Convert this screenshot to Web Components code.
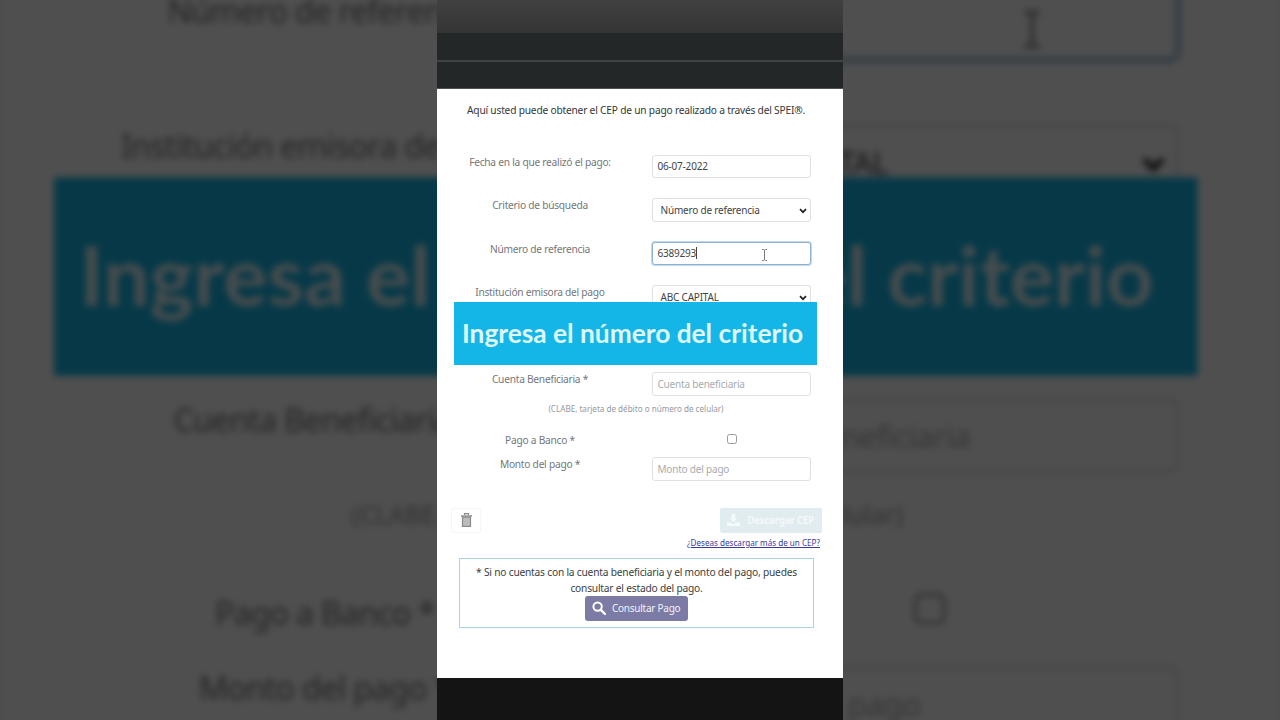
<!DOCTYPE html>
<html lang="es">
<head>
<meta charset="utf-8">
<title>CEP</title>
<style>
  html, body { margin: 0; height: 100%; background: #4f4f4f; overflow: hidden; }
</style>
</head>
<body>
<short-player></short-player>

<script>
const FONT = '"Noto Sans", "Open Sans", "DejaVu Sans", sans-serif';

class CepField extends HTMLElement {
    constructor() {
        super();
        this.shadowDOM = this.attachShadow({ mode: "open" });
    }

    connectedCallback() {
        const chevron = this.hasAttribute("select")
            ? `<svg class="chevron" width="8" height="6" viewBox="0 0 8 6"><path d="M1 1.2 L4 4.2 L7 1.2" fill="none" stroke="#222" stroke-width="1.7"/></svg>`
            : "";
        const cursor = this.hasAttribute("focused")
            ? `<i class="caret"></i><svg class="ibeam" width="7" height="12" viewBox="0 0 7 12"><path d="M1 .5h1.6l.9.8.9-.8H6M3.5 1.3v9.4M1 11.5h1.6l.9-.8.9.8H6" fill="none" stroke="#555" stroke-width=".8"/></svg>`
            : "";
        this.shadowDOM.innerHTML = `
        <style>
            :host {
                display: flex;
                align-items: center;
                position: relative;
                box-sizing: border-box;
                width: 159px;
                height: 23.6px;
                padding: 0 4.5px;
                background: #fff;
                border: 1px solid #e0e0e0;
                border-radius: 3px;
                font-size: 10px;
                letter-spacing: -.2px;
                color: #3f4448;
            }
            :host([select]) { padding-left: 7.5px; }
            :host([placeholder]) { color: #a9abad; }
            :host([focused]) {
                border-color: #8fb2cf;
                box-shadow: 0 0 0 1px #c3d9ea;
            }
            .caret { width: 1px; height: 12px; background: #444; }
            .chevron { position: absolute; right: 3px; top: 8.5px; }
            .ibeam { position: absolute; left: 108px; top: 6px; }
        </style>
        <slot></slot>${chevron}${cursor}`;
    }
}

class CepRow extends HTMLElement {
    constructor() {
        super();
        this.shadowDOM = this.attachShadow({ mode: "open" });
    }

    connectedCallback() {
        this.shadowDOM.innerHTML = `
        <style>
            :host {
                display: grid;
                grid-template-columns: 172px 159px;
                column-gap: 26px;
                height: 23.6px;
            }
            .label {
                text-align: center;
                font-size: 10.2px;
                letter-spacing: -.25px;
                line-height: 14px;
                color: #75777a;
            }
            .control { display: flex; justify-content: center; }
        </style>
        <div class="label">${this.getAttribute("label") || ""}</div>
        <div class="control"><slot></slot></div>`;
    }
}

class CepCheck extends HTMLElement {
    constructor() {
        super();
        this.attachShadow({ mode: "open" }).innerHTML = `
        <style>
            :host {
                display: block;
                box-sizing: border-box;
                width: 10px;
                height: 10px;
                margin-top: 1px;
                border: 1px solid #9a9a9a;
                border-radius: 2.5px;
                background: #fff;
            }
        </style>`;
    }
}

class CepButton extends HTMLElement {
    constructor() {
        super();
        this.attachShadow({ mode: "open" }).innerHTML = `
        <style>
            :host {
                display: inline-flex;
                align-items: center;
                box-sizing: border-box;
                height: 25px;
                flex: none;
                border-radius: 2px;
                font-size: 10px;
                letter-spacing: -.25px;
                white-space: nowrap;
            }
            :host([kind="trash"]) {
                width: 30px;
                justify-content: center;
                background: #fff;
                border: 1px solid #f5f5f5;
            }
            :host([kind="download"]) {
                width: 102px;
                padding-left: 7px;
                gap: 7px;
                background: #e0ecf0;
                color: #f4f8fa;
                font-weight: 700;
                letter-spacing: -.35px;
            }
            :host([kind="query"]) {
                width: 103px;
                padding-left: 7px;
                gap: 6px;
                background: #7b7ba6;
                color: #f2f2f7;
                border-radius: 3px;
            }
            svg { display: block; flex: none; }
        </style>
        <slot name="icon"></slot><slot></slot>`;
    }
}

class CepForm extends HTMLElement {
    constructor() {
        super();
        this.attachShadow({ mode: "open" }).innerHTML = `
        <style>
            :host {
                display: block;
                box-sizing: border-box;
                height: 100%;
                background: #fff;
                font-family: ${FONT};
                padding-top: 13.5px;
            }
            .intro {
                width: 400px;
                margin-left: -1px;
                text-align: center;
                font-size: 10.2px;
                letter-spacing: -.2px;
                line-height: 15px;
                color: #33373a;
            }
            .rows {
                display: flex;
                flex-direction: column;
                gap: 19.95px;
                margin: 37px 0 0 17px;
            }
            .help {
                margin: 7px 0 0 17px;
                width: 364px;
                text-align: center;
                font-size: 8.1px;
                line-height: 11px;
                color: #96999c;
            }
            .lower {
                display: flex;
                flex-direction: column;
                gap: 13.5px;
                margin: 19px 0 0 17px;
            }
            .lower cep-row { height: 11px; }
            .lower cep-row.tall { height: 23.6px; }
            .actions {
                display: flex;
                justify-content: space-between;
                margin: 27px 21px 0 14px;
            }
            .more {
                margin: 4px 23px 0 0;
                text-align: right;
                font-size: 8.1px;
                line-height: 12px;
                color: #3b3b9c;
                text-decoration: underline;
            }
            .notice {
                display: flex;
                flex-direction: column;
                align-items: center;
                box-sizing: border-box;
                width: 355px;
                height: 70px;
                margin: 9px 0 0 22px;
                padding: 5px 12px 0;
                border: 1px solid #a9d3e3;
                font-size: 10.2px;
                letter-spacing: -.2px;
                line-height: 16px;
                text-align: center;
                color: #3a3e42;
            }
            .banner {
                position: absolute;
                left: 17px;
                top: 302px;
                box-sizing: border-box;
                width: 363px;
                height: 63px;
                padding: 0 6px 2px 0;
                display: flex;
                align-items: center;
                justify-content: center;
                background: #13b6e6;
                color: #dff6fb;
                font: 700 26.3px "Lato", "Liberation Sans", sans-serif;
                white-space: nowrap;
            }
        </style>
        <div class="intro">Aquí usted puede obtener el CEP de un pago realizado a través del SPEI®.</div>
        <div class="rows">
            <cep-row label="Fecha en la que realizó el pago:"><cep-field>06-07-2022</cep-field></cep-row>
            <cep-row label="Criterio de búsqueda"><cep-field select>Número de referencia</cep-field></cep-row>
            <cep-row label="Número de referencia"><cep-field focused>6389293</cep-field></cep-row>
            <cep-row label="Institución emisora del pago"><cep-field select>ABC CAPITAL</cep-field></cep-row>
            <cep-row></cep-row>
            <cep-row label="Cuenta Beneficiaria *"><cep-field placeholder>Cuenta beneficiaria</cep-field></cep-row>
        </div>
        <div class="help">(CLABE, tarjeta de débito o número de celular)</div>
        <div class="lower">
            <cep-row label="Pago a Banco *"><cep-check></cep-check></cep-row>
            <cep-row class="tall" label="Monto del pago *"><cep-field placeholder>Monto del pago</cep-field></cep-row>
        </div>
        <div class="actions">
            <cep-button kind="trash">
                <svg slot="icon" width="11" height="14" viewBox="0 0 11 14"><path d="M3.5 2V.7h4V2" fill="none" stroke="#8a8a8a" stroke-width="1.2"/><path d="M0 2.3h11v1.4H0z" fill="#8a8a8a"/><path d="M1.5 4.2h8v9.1h-8z" fill="#bcbcbc" stroke="#8a8a8a" stroke-width="1.2"/></svg>
            </cep-button>
            <cep-button kind="download">
                <svg slot="icon" width="13" height="12" viewBox="0 0 13 12"><path d="M4.7 0h3.600v4.500H10.500L6.500 8 2.500 4.500h2.200zM0 8.500h3.800L6.500 10.300 9.200 8.500H13V12H0z" fill="#f6fafb"/></svg>
                Descargar CEP
            </cep-button>
        </div>
        <div class="more">¿Deseas descargar más de un CEP?</div>
        <div class="notice">
            <div>* Si no cuentas con la cuenta beneficiaria y el monto del pago, puedes consultar el estado del pago.</div>
            <cep-button kind="query">
                <svg slot="icon" width="14" height="14" viewBox="0 0 14 14"><circle cx="5.6" cy="5.6" r="4.2" fill="none" stroke="#fff" stroke-width="2"/><path d="M8.8 8.800 L13 13" stroke="#fff" stroke-width="2.4" stroke-linecap="round"/></svg>
                Consultar Pago
            </cep-button>
        </div>
        <div class="banner">Ingresa el número del criterio</div>`;
    }
}

class CepScreen extends HTMLElement {
    constructor() {
        super();
        this.attachShadow({ mode: "open" }).innerHTML = `
        <style>
            :host {
                display: flex;
                flex-direction: column;
                position: relative;
                width: 406px;
                height: 720px;
                background: #141414;
            }
            .top {
                height: 89px;
                flex: none;
                display: flex;
                flex-direction: column;
            }
            .shade { height: 33px; background: linear-gradient(#414141, #343434); }
            .band { height: 27px; background: #232728; }
            .band.low { height: 26px; border-top: 2px solid #3f4344; border-bottom: 1px solid #4f5151; }
            .main { flex: 1; min-height: 0; }
            .foot { height: 42px; flex: none; background: #141414; }
        </style>
        <div class="top">
            <div class="shade"></div>
            <div class="band"></div>
            <div class="band low"></div>
        </div>
        <div class="main"><cep-form></cep-form></div>
        <div class="foot"></div>`;
    }
}

class ShortPlayer extends HTMLElement {
    constructor() {
        super();
        this.attachShadow({ mode: "open" }).innerHTML = `
        <style>
            :host {
                display: flex;
                justify-content: center;
                position: relative;
                width: 1280px;
                height: 720px;
                overflow: hidden;
                background: #4f4f4f;
            }
            .backdrop {
                position: absolute;
                inset: 0;
                overflow: hidden;
                display: flex;
                justify-content: center;
            }
            .backdrop cep-screen {
                flex: none;
                transform: scale(3.15);
                transform-origin: 50% 50%;
                filter: blur(1.2px) brightness(.31);
            }
            .front { position: relative; }
        </style>
        <div class="backdrop"><cep-screen></cep-screen></div>
        <div class="front"><cep-screen></cep-screen></div>`;
    }
}

customElements.define("cep-field", CepField);
customElements.define("cep-row", CepRow);
customElements.define("cep-check", CepCheck);
customElements.define("cep-button", CepButton);
customElements.define("cep-form", CepForm);
customElements.define("cep-screen", CepScreen);
customElements.define("short-player", ShortPlayer);
</script>
</body>
</html>
